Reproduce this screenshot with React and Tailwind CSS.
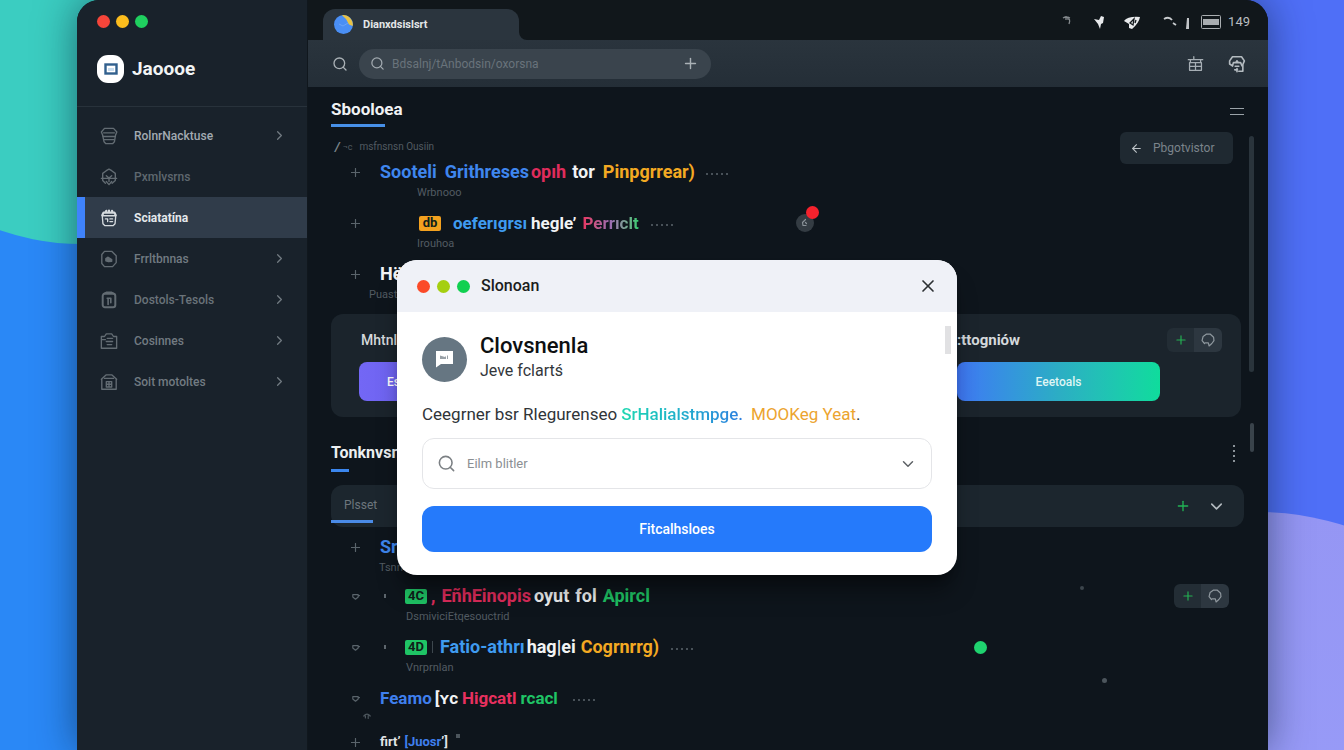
import React from "react";
import { Search, Plus, ChevronRight, ChevronDown, X, ArrowLeft } from "lucide-react";

function Icon({ size, className, children, sw = 1.5 }) {
  return (
    <svg
      width={size}
      height={size}
      viewBox="0 0 20 20"
      fill="none"
      stroke="currentColor"
      strokeWidth={sw}
      strokeLinecap="round"
      strokeLinejoin="round"
      className={className}
      aria-hidden="true"
    >
      {children}
    </svg>
  );
}

const navItems = [
  {
    label: "RolnrNacktuse",
    tone: "text-[#a3abb2]",
    icon: (
      <>
        <path d="M5 1.500h10l3.700 4-1.400 3.400-1.300 7.600-2 2H6.500l-2-2-1.600-7.600L1.500 5.500z" />
        <path d="M4 6.500h12M3.500 10.500h13M4.500 14h11" />
      </>
    ),
    arrow: true,
  },
  {
    label: "Pxmlvsrns",
    tone: "text-[#5f686f]",
    icon: (
      <>
        <path d="M7 3l3-1.800L13 3l4 3v8l-3.500 3M7 3L3 6v8l3 3M7 15l3 3.500 3-3.500" />
        <path d="M1.500 11.500h17M7 8.500l3 2.500 3-2.500M10 11v4" />
      </>
    ),
  },
  {
    label: "Sciatatína",
    tone: "text-[#e4e8eb]",
    active: true,
    icon: (
      <>
        <path d="M2.500 7.500h15l-.8 9-2.200 2h-9l-2.200-2z" />
        <path d="M2.500 7L4 4h12l1.500 3M6 4l1-2M10 4V1.800M14 4l-.6-2" strokeWidth="2.400" />
        <path d="M6 11h2.500v3M11 11h3M11 14h3" />
      </>
    ),
  },
  {
    label: "Frrltbnnas",
    tone: "text-[#727b82]",
    icon: (
      <>
        <path d="M5 1.500h8l5 5V14l-4 4.500H5L2 15V5z" />
        <path d="M6.500 12V9.500L9 8l4 2.500v2L9.500 13z" fill="currentColor" />
      </>
    ),
    arrow: true,
  },
  {
    label: "Dostols-Tesols",
    tone: "text-[#6a737a]",
    icon: (
      <>
        <rect x="3" y="3" width="14" height="15" rx="2.500" strokeWidth="2.200" />
        <path d="M4 3l3-1.500h6L16 3M8 8h4M9 8v7M12 8v5" strokeWidth="1.800" />
      </>
    ),
    arrow: true,
  },
  {
    label: "Cosinnes",
    tone: "text-[#727b82]",
    icon: (
      <>
        <path d="M1.500 5H5l2-3h6l2 3h3.500v13h-17z" />
        <path d="M2 8.500h4M8 7h6M7 10.500h7M8 14h5" />
      </>
    ),
    arrow: true,
  },
  {
    label: "Soit motoltes",
    tone: "text-[#727b82]",
    icon: (
      <>
        <path d="M1.500 7L7 2h6l5.500 5M2 7v11h16V7M5 6h10" />
        <path d="M7 9.500h6v6H7zM7 12.500h5M10 9.500v6" />
      </>
    ),
    arrow: true,
  },
];

function Backdrop() {
  return (
    <svg
      className="absolute inset-0 h-full w-full"
      viewBox="0 0 1344 750"
      preserveAspectRatio="none"
      aria-hidden="true"
    >
      <defs>
        <linearGradient id="lav" x1="0" y1="0" x2="0" y2="1">
          <stop offset="0" stopColor="#9596f4" />
          <stop offset="1" stopColor="#9a9ffb" />
        </linearGradient>
      </defs>
      <rect width="672" height="750" fill="#2a88f6" />
      <rect x="672" width="672" height="750" fill="#4f6ff7" />
      <circle cx="82" cy="-8" r="252" fill="#3bcdc1" />
      <circle cx="1258" cy="792" r="280" fill="url(#lav)" />
    </svg>
  );
}

function Sidebar() {
  return (
    <aside className="flex w-[231px] shrink-0 flex-col border-r border-[#10171d] bg-[#19222b]">
      <div className="flex h-[42px] items-center gap-[6px] pl-5">
        <span className="size-[13px] rounded-full bg-[#f5453a]" />
        <span className="size-[13px] rounded-full bg-[#fcbd1d]" />
        <span className="size-[13px] rounded-full bg-[#1fd05f]" />
      </div>
      <div className="flex h-[65px] items-start gap-2 border-b border-[#28323b] pt-[13px] pl-5">
        <svg width="27" height="28" viewBox="0 0 27 28" aria-hidden="true">
          <rect width="27" height="28" rx="11" fill="#fff" />
          <rect x="8.500" y="9.500" width="11" height="9" fill="#fff" stroke="#31608e" strokeWidth="2.400" />
          <path d="M11 13h6v3h-6z" fill="#c9def0" />
        </svg>
        <span className="text-[19px] leading-7 font-bold text-[#f1f4f5]">Jaoooe</span>
      </div>
      <nav className="flex flex-col pt-2">
        {navItems.map((item) => (
          <a
            key={item.label}
            href="#"
            className={
              item.active
                ? "flex h-[41px] items-center border-l-8 border-[#3f83fb] bg-[#303c4a] pr-5 pl-[15px]"
                : "flex h-[41px] items-center pr-5 pl-[23px]"
            }
          >
            <Icon size={18} className={item.active ? "text-[#d5dade]" : "text-[#636c73]"}>
              {item.icon}
            </Icon>
            <span
              className={`ml-4 text-[12px] leading-4 ${item.active ? "font-bold" : "font-medium"} ${item.tone}`}
            >
              {item.label}
            </span>
            {item.arrow && <ChevronRight size={15} className="ml-auto text-[#727b82]" />}
          </a>
        ))}
      </nav>
    </aside>
  );
}

function StatusIcons() {
  return (
    <div className="flex items-center text-[#e8eaec]">
      <svg width="162" height="20" viewBox="0 0 162 20" aria-hidden="true" fill="currentColor">
        <path d="M3 6q3-2 7 0M6 4v4M7 7q4-1 2 5" fill="none" stroke="#84898d" strokeWidth="1.300" />
        <path d="M34 7l5 1 2-4 3 1-1 6-2 1-1 5-2-5z" />
        <path d="M64 9q4-5 16-4-1 6-8 12l-3-1v-4z" />
        <path d="M70 11l4-4-1 6zM76 8l-1 3" fill="none" stroke="#11171b" strokeWidth="1.300" />
        <path d="M104 7q5-3 8 1M113 11l3 2" fill="none" stroke="#c9cccf" strokeWidth="1.800" />
        <path d="M127 6l2 0v11h-3z" fill="#c2c5c8" />
        <rect x="141.500" y="3.500" width="19" height="13" rx="1" fill="none" stroke="#a9adb0" />
        <path d="M143 7h16v6h-16z" fill="#a9adb0" />
      </svg>
      <span className="ml-[6px] text-[13px] leading-5 text-[#b9bdc0]">149</span>
    </div>
  );
}

function TopBar() {
  return (
    <header>
      <div className="flex h-10 items-end bg-[#11171b] pr-[18px] pl-[15px]">
        <div className="flex h-[31px] w-[196px] items-center gap-[10px] rounded-t-xl bg-[#2b353e] pl-[11px]">
          <svg width="19" height="19" viewBox="0 0 19 19" aria-hidden="true">
            <circle cx="9.500" cy="9.500" r="9.500" fill="#4a8ff5" />
            <path d="M8 .2A9.500 9.500 0 0 1 18.700 11L15 9.500 12 4z" fill="#e9c244" />
            <path d="M5 9l4 2 5-3" stroke="#6aa3f8" fill="none" />
          </svg>
          <span className="text-[11px] leading-4 font-bold text-[#e3e6e8]">Dianxdsislsrt</span>
        </div>
        <svg width="8" height="8" viewBox="0 0 8 8" aria-hidden="true">
          <path d="M0 0v8h8a8 8 0 0 1-8-8z" fill="#2b353e" />
        </svg>
        <div className="ml-auto self-center pt-1">
          <StatusIcons />
        </div>
      </div>
      <div className="flex h-[47px] items-center bg-linear-to-b from-[#2a343d] to-[#242e37] pr-[22px] pl-6">
        <button type="button" aria-label="Search" className="text-[#aab1b6]">
          <Search size={16} />
        </button>
        <div className="ml-[11px] flex h-[30px] w-[352px] items-center rounded-full bg-[#3a444d] pr-3 pl-[11px]">
          <Search size={15} className="text-[#a3abb1]" />
          <input
            aria-label="Address"
            placeholder="Bdsalnj/tAnbodsin/oxorsna"
            className="ml-[7px] min-w-0 flex-1 bg-transparent text-[12px] text-white outline-none placeholder:text-[#69737b]"
          />
          <button type="button" aria-label="Add" className="text-[#aab1b6]">
            <Plus size={17} />
          </button>
        </div>
        <button type="button" aria-label="Layout" className="ml-auto text-[#a6aeb4]">
          <Icon size={17}>
            <path d="M1.500 5.500h17M3 9h14v9H3zM3 13.500h14M10 9v9M4 5.500V9M16 5.500V9M8 5V2" />
          </Icon>
        </button>
        <button type="button" aria-label="Account" className="ml-6 text-[#b4bbc0]">
          <Icon size={18} sw={1.800}>
            <path d="M5 12L1.800 10V6.500L5 2h10l3.200 4.500-1.700 4V18H12" />
            <path d="M5 12l1-3.500h8L15.500 12M8 12.500h4M7.500 16.500h3M10 15v3.500M8.500 8.500l1.500-2 1.500 2" />
          </Icon>
        </button>
      </div>
    </header>
  );
}

function Dots({ className }) {
  return (
    <span className={`flex gap-[3px] ${className}`} aria-hidden="true">
      {[0, 1, 2, 3, 4].map((i) => (
        <i key={i} className="size-[2px] rounded-full bg-[#5d666d]" />
      ))}
    </span>
  );
}

function Marker({ kind = "plus" }) {
  return (
    <span className="flex w-[49px] shrink-0 pl-5 text-[#5a646b]">
      {kind === "plus" ? (
        <Icon size={9} sw={2.600}>
          <path d="M10 1v18M1 10h18" />
        </Icon>
      ) : (
        <Icon size={9} sw={2.600}>
          <path d="M4 6h12v5l-6 5-6-5zM16 8h3" />
        </Icon>
      )}
    </span>
  );
}

function Row({ marker, size = "text-[18px]", indent, tag, children, sub, subIndent, trailing }) {
  return (
    <li>
      <div className={`flex h-6 items-center leading-6 font-bold whitespace-nowrap ${size}`}>
        <Marker kind={marker} />
        {indent}
        {tag}
        {children}
        {trailing}
      </div>
      {sub && (
        <p className={`mt-px h-4 text-[11px] leading-4 text-[#525b62] ${subIndent}`}>{sub}</p>
      )}
    </li>
  );
}

function Tag({ className, children }) {
  return (
    <span
      className={`flex h-[15px] w-[22px] shrink-0 items-center justify-center rounded-[2px] text-[13px] leading-4 font-bold text-[#10201a] ${className}`}
    >
      {children}
    </span>
  );
}

function ActionPair({ className }) {
  return (
    <div className={`flex overflow-hidden rounded-md ${className}`}>
      <button
        type="button"
        aria-label="Add"
        className="flex h-6 w-[27px] items-center justify-center bg-[#232d35] text-[#25b253]"
      >
        <Plus size={14} />
      </button>
      <button
        type="button"
        aria-label="Options"
        className="flex h-6 w-7 items-center justify-center bg-[#2d3740] text-[#8f989e]"
      >
        <Icon size={14} sw={1.700}>
          <path d="M5 15L1.500 11 3 5l5-3.500h5L18 6l.5 5-3 4-4 3.500-1-4.500H6" />
        </Icon>
      </button>
    </div>
  );
}

function Content() {
  return (
    <main className="relative flex-1 overflow-hidden bg-[#0e151c] pr-6 pl-[23px]">
      <div className="flex items-center justify-between pt-3">
        <h1 className="h-5 text-[17px] leading-5 font-bold text-[#f0f2f4]">Sbooloea</h1>
        <button type="button" aria-label="Menu" className="flex w-[14px] flex-col gap-[5px] pt-1">
          <i className="h-px w-full bg-[#9aa2a8]" />
          <i className="h-px w-full bg-[#9aa2a8]" />
        </button>
      </div>
      <div className="mt-[5px] h-[3px] w-[54px] bg-[#4790e8]" />

      <div className="flex items-start">
        <div className="min-w-0 flex-1">
          <div className="mt-3 flex h-4 items-center text-[10px] leading-4 text-[#525b62]">
            <span className="pl-1 text-[13px] font-bold text-[#7c858b] italic">/</span>
            <span className="pl-[3px] text-[9px]">¬c</span>
            <span className="pl-[7px]">msfnsnsn Ousiin</span>
          </div>
          <ul className="mt-[5px] flex flex-col gap-[10px]">
            <Row sub="Wrbnooo" subIndent="pl-[86px]">
              <span className="text-[#3f86ee]">Sooteli</span>
              <span className="ml-2 text-[#3f86ee]">Grithreses</span>
              <span className="ml-[2px] text-[#e02c5c]">opıh</span>
              <span className="ml-[6px] text-[#f1f3f4]">tor</span>
              <span className="ml-2 text-[#f3a922]">Pinpgrrear)</span>
              <Dots className="mt-1 ml-[11px]" />
            </Row>
            <Row
              size="text-[17px]"
              sub="Irouhoa"
              subIndent="pl-[86px]"
              indent={<span className="w-[39px] shrink-0" />}
              tag={<Tag className="bg-[#f3a11f]">db</Tag>}
              trailing={
                <span className="relative mr-[306px] ml-auto flex size-[18px] shrink-0 items-center justify-center rounded-full bg-[#343c43] text-[#8b9399]">
                  <Icon size={10} sw={2.400}>
                    <path d="M11 3L5 9l1 6h6M11 9l2 2" />
                  </Icon>
                  <span className="absolute -top-2 -right-[5px] size-[13px] rounded-full bg-[#f5222d]" />
                </span>
              }
            >
              <span className="ml-3 text-[#3f9bf0]">oeferıgrsı</span>
              <span className="ml-1 text-[#f1f3f4]">hegle&#8217;</span>
              <span className="ml-[6px] bg-linear-to-r from-[#e8305f] via-[#9a6bb0] to-[#23cf6d] bg-clip-text text-transparent">
                Perrıclt
              </span>
              <Dots className="mt-1 ml-3" />
            </Row>
            <Row sub="Puastrnn" subIndent="pl-[38px]">
              <span className="text-[#f1f3f4]">Hënsoe</span>
            </Row>
          </ul>
        </div>
        <button
          type="button"
          className="mt-[5px] mr-[11px] flex h-8 w-[113px] shrink-0 items-center gap-[10px] rounded-md bg-[#1f2931] pl-[10px] text-[12px] text-[#7b848b]"
        >
          <ArrowLeft size={13} className="text-[#bcc2c6]" />
          Pbgotvistor
        </button>
      </div>

      <section className="mt-[11px] mr-[3px] flex items-start rounded-xl bg-[#1b242c] pt-4 pr-[19px] pb-4 pl-7">
        <div className="flex flex-1 justify-between">
          <div className="w-[202px]">
            <h2 className="h-5 pl-[2px] text-[14px] leading-5 font-medium text-[#d5d9dc]">Mhtnlsos</h2>
            <button
              type="button"
              className="mt-3 flex h-[39px] w-full items-center rounded-lg bg-linear-to-r from-[#7367f5] to-[#5a56e0] pl-7 text-[12px] font-medium text-white"
            >
              Esntoste
            </button>
          </div>
          <div className="w-[203px]">
            <h2 className="h-5 text-[15px] leading-5 font-bold text-[#d5d9dc]">:ttogniów</h2>
            <button
              type="button"
              className="mt-3 h-[39px] w-full rounded-lg bg-linear-to-r from-[#4076f5] via-[#2cadc4] to-[#0fdc9c] text-[12px] font-medium text-[#dff5f4]"
            >
              Eeetoals
            </button>
          </div>
        </div>
        <ActionPair className="-mt-[2px] ml-[7px]" />
      </section>

      <div className="mt-[26px] flex items-center justify-between pr-[9px]">
        <h2 className="h-5 text-[16px] leading-5 font-bold text-[#eceff1]">Tonknvsm</h2>
        <button type="button" aria-label="More" className="flex flex-col gap-[3px]">
          <i className="size-[2px] bg-[#8b9399]" />
          <i className="size-[2px] bg-[#8b9399]" />
          <i className="size-[2px] bg-[#8b9399]" />
          <i className="size-[2px] bg-[#8b9399]" />
        </button>
      </div>
      <div className="mt-[6px] h-[3px] w-[18px] bg-[#3b86ee]" />

      <div className="mt-[13px] flex h-[42px] items-stretch rounded-xl bg-[#1c262e] pr-[18px]">
        <button
          type="button"
          className="flex w-[42px] flex-col justify-between pt-3 pb-1 text-[12px] leading-4 text-[#6d767d]"
        >
          <span className="pl-[13px]">Plsset</span>
          <span className="h-[3px] w-full bg-[#4a8ae6]" />
        </button>
        <button type="button" aria-label="Add" className="ml-auto text-[#22b455]">
          <Plus size={16} />
        </button>
        <button type="button" aria-label="Expand" className="ml-4 text-[#b4bbc0]">
          <ChevronDown size={19} />
        </button>
      </div>

      <ul className="mt-2 flex flex-col">
        <Row sub="Tsnrnos" subIndent="pl-12">
          <span className="text-[#3f86ee]">Srotels</span>
        </Row>
        <li className="h-2" aria-hidden="true" />
        <Row
          marker="dot"
          sub="DsmiviciEtqesouctrid"
          subIndent="pl-[75px]"
          indent={<i className="mr-[19px] ml-1 h-1 w-[2px] shrink-0 bg-[#5d666d]" />}
          tag={<Tag className="bg-[#1fc465]">4C</Tag>}
          trailing={
            <>
              <span className="mr-[90px] ml-auto mb-4 size-1 rounded-full bg-[#3c454c]" />
              <ActionPair className="mr-[15px]" />
            </>
          }
        >
          <span className="ml-1 text-[#e02c5c]">,</span>
          <span className="ml-[6px] text-[#e02c5c]">EñhEinopis</span>
          <span className="ml-[3px] text-[#f1f3f4]">oyut</span>
          <span className="ml-[6px] text-[#f1f3f4]">fol</span>
          <span className="ml-[6px] text-[#1fc465]">Apircl</span>
        </Row>
        <li className="h-[10px]" aria-hidden="true" />
        <Row
          marker="dot"
          sub="Vnrprnlan"
          subIndent="pl-[75px]"
          indent={<i className="mr-[19px] ml-1 h-1 w-[2px] shrink-0 bg-[#5d666d]" />}
          tag={<Tag className="bg-[#1fc465]">4D</Tag>}
          trailing={<span className="mr-[257px] ml-auto size-[13px] rounded-full bg-[#1fd36f]" />}
        >
          <i className="ml-[5px] h-3 w-px bg-[#3d474e]" />
          <span className="ml-[7px] text-[#3f9bf0]">Fatio-athrı</span>
          <span className="ml-[2px] text-[#f1f3f4]">hag|ei</span>
          <span className="ml-[5px] text-[#f3a922]">Cogrnrrg)</span>
          <Dots className="mt-1 ml-3" />
        </Row>
        <li className="h-[10px]" aria-hidden="true" />
        <Row
          marker="dot"
          size="text-[17px]"
          trailing={
            <span className="mr-[137px] ml-auto mb-9 size-[5px] rounded-full bg-[#4c555c]" />
          }
        >
          <span className="text-[#3f7fee]">Feamo</span>
          <span className="ml-[3px] text-[#f1f3f4]">[ʏc</span>
          <span className="ml-1 text-[#e8305f]">Higcatl</span>
          <span className="ml-1 text-[#1fc465]">rcacl</span>
          <Dots className="mt-1 ml-[15px]" />
        </Row>
        <li className="flex h-5 items-start pt-[2px] pl-8 text-[#4c555c]" aria-hidden="true">
          <Icon size={8} sw={3}>
            <path d="M2 10q8-9 16 0M6 10v5M13 9v7" />
          </Icon>
        </li>
        <Row marker="plus" size="text-[13px]">
          <span className="leading-4 text-[#e3e6e8]">ﬁrt&#8217;</span>
          <span className="ml-1 leading-4 text-[#3f7fee]">[Juosr</span>
          <span className="leading-4 text-[#e3e6e8]">&#8217;]</span>
          <i className="mb-3 ml-2 size-1 bg-[#4c555c]" />
        </Row>
      </ul>

      <div className="absolute top-[49px] right-[14px] h-[236px] w-[5px] rounded-full bg-[#2a343c]" />
      <div className="absolute top-[336px] right-[14px] h-[29px] w-[4px] rounded-full bg-[#39434b]" />
    </main>
  );
}

function Dialog() {
  return (
    <div className="pointer-events-none absolute inset-0 flex items-start justify-center pt-[260px] pl-[10px]">
      <div
        role="dialog"
        aria-labelledby="dialog-title"
        className="pointer-events-auto relative w-[560px] overflow-hidden rounded-[20px] bg-white shadow-xl shadow-black/40"
      >
        <div className="flex h-[52px] items-center gap-[7px] bg-[#eff1f7] pr-[19px] pl-5">
          <span className="size-[13px] rounded-full bg-[#fb4a28]" />
          <span className="size-[13px] rounded-full bg-[#a5cf10]" />
          <span className="size-[13px] rounded-full bg-[#10d050]" />
          <h2 id="dialog-title" className="ml-1 text-[16px] leading-6 font-medium text-[#1b1d20]">
            Slonoan
          </h2>
          <button type="button" aria-label="Close" className="ml-auto text-[#2c3033]">
            <X size={20} />
          </button>
        </div>
        <div className="px-[25px] pt-5 pb-[23px]">
          <div className="flex items-center gap-[13px]">
            <span className="mt-1 flex size-[45px] items-center justify-center rounded-full bg-[#667682]">
              <svg width="19" height="18" viewBox="0 0 19 18" aria-hidden="true">
                <path d="M1 1h17v13H6l-5 3.500z" fill="#fff" />
                <path d="M5 5.500l5 1.500 1-1v3H5zM12 5.500h1V9h-1z" fill="#99a1a7" />
              </svg>
            </span>
            <div>
              <p className="text-[22px] leading-7 font-medium text-[#0d0f11]">Clovsnenla</p>
              <p className="text-[16px] leading-[22px] text-[#33373b]">Jeve fclartś</p>
            </div>
          </div>
          <p className="mt-5 flex text-[17px] leading-6 whitespace-nowrap text-[#303438]">
            Ceegrner bsr Rlegurenseo
            <span className="ml-1 bg-linear-to-r from-[#1fd8b0] to-[#2f7fe0] bg-clip-text font-medium text-transparent">
              SrHalialstmpge.
            </span>
            <span className="ml-2 text-[#eca42f]">MOOKeg Yeat</span>.
          </p>
          <div className="mt-3 flex h-[51px] items-center rounded-xl border border-[#e4e5e8] pr-[14px] pl-[14px]">
            <Search size={19} className="text-[#7c8084]" />
            <input
              aria-label="Search"
              placeholder="Eilm blitler"
              className="ml-[11px] min-w-0 flex-1 bg-transparent text-[13px] text-[#303438] outline-none placeholder:text-[#8b8f93]"
            />
            <button type="button" aria-label="Open list" className="text-[#5f6367]">
              <ChevronDown size={18} />
            </button>
          </div>
          <button
            type="button"
            className="mt-[17px] h-[46px] w-full rounded-xl bg-[#257afb] text-[14px] font-medium text-white"
          >
            Fitcalhsloes
          </button>
        </div>
        <div className="absolute top-[66px] right-[6px] h-[28px] w-[6px] bg-[#e1e1e3]" />
      </div>
    </div>
  );
}

export default function App() {
  return (
    <div className="relative h-screen overflow-hidden font-['Roboto','Liberation_Sans',sans-serif]">
      <Backdrop />
      <div className="relative mr-[76px] ml-[77px] flex h-full overflow-hidden rounded-t-[22px] bg-[#0e151c] shadow-[0_0_40px_rgba(10,30,50,0.55)]">
        <Sidebar />
        <div className="flex min-w-0 flex-1 flex-col">
          <TopBar />
          <Content />
        </div>
      </div>
      <Dialog />
    </div>
  );
}
